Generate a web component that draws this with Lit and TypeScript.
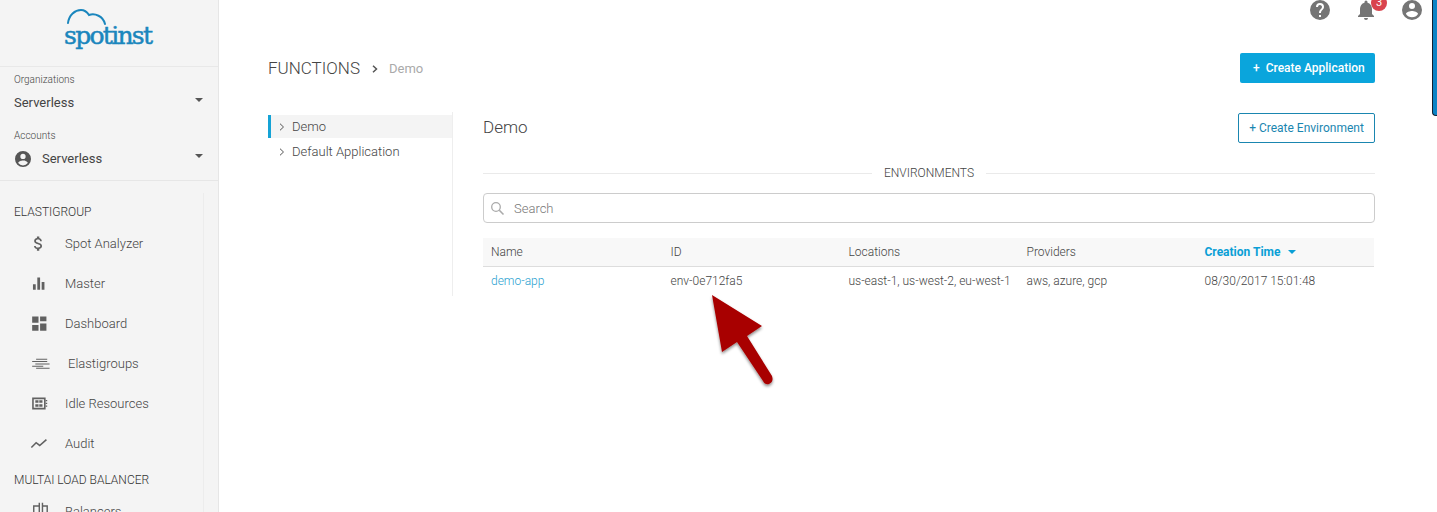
import { LitElement, html, css, svg } from "lit";
import { customElement } from "lit/decorators.js";

const navIcons: Record<string, unknown> = {
  dollar: svg`<path fill="#616161" d="M11.8 10.9c-2.27-.59-3-1.2-3-2.15 0-1.09 1.01-1.85 2.7-1.85 1.78 0 2.44.85 2.5 2.1h2.21c-.07-1.72-1.12-3.3-3.21-3.81V3h-3v2.16c-1.94.42-3.5 1.68-3.5 3.61 0 2.31 1.91 3.46 4.7 4.13 2.5.6 3 1.48 3 2.41 0 .69-.49 1.79-2.7 1.79-2.06 0-2.87-.92-2.98-2.1h-2.2c.12 2.19 1.76 3.42 3.68 3.83V21h3v-2.15c1.95-.37 3.5-1.5 3.5-3.55 0-2.84-2.43-3.81-4.7-4.4z"/>`,
  bars: svg`<path fill="#616161" d="M5 13h3.500v7H5zM10.500 4.500h3.500V20h-3.500zM16 10h3.500v10H16z"/>`,
  dash: svg`<path fill="#616161" d="M4 11h8V3H4zm0 10h8v-7H4zm10 0h8V12h-8zm0-18v6h8V3z"/>`,
  groups: svg`<path fill="none" stroke="#616161" stroke-width="1.300" d="M9 6.500h14M4 9.500h19M8 12.500h18M4 15.500h14M9 18h17"/>`,
  idle: svg`<path fill="none" stroke="#616161" stroke-width="2" d="M5 5.500h15v13H5z"/><path fill="#616161" d="M8 8h4v3H8zM13 8h4v3h-4zM8 13h4v3H8zM13 13h4v3h-4zM21 7.500h2V9h-2zM21 11h2v1.500h-2zM21 14.500h2V16h-2z"/>`,
  audit: svg`<path fill="none" stroke="#616161" stroke-width="2" d="M3 17l6-6 4.500 3.500L22 7"/>`,
  bal: svg`<path fill="none" stroke="#616161" stroke-width="1.800" d="M6 24V5h7M13 24V1M17 24V1M17 5h6v19"/>`,
};

@customElement("app-root")
export class AppRoot extends LitElement {
  static styles = css`
    :host { display: block; width: 1437px; height: 512px; overflow: hidden; position: relative;
      font-family: Roboto, "Liberation Sans", sans-serif; font-weight: 300; color: #555; background: #fff; }
    * { box-sizing: border-box; }
    .page { display: flex; height: 512px; }
    .side { width: 219px; flex: none; height: 512px; background: #f4f4f4; border-right: 1px solid #e6e6e6; overflow: hidden; }
    .logo { height: 67px; border-bottom: 1px solid #e8e8e8; position: relative; }
    .logo svg { position: absolute; left: 60px; top: 4px; }
    .logotext { position: absolute; left: 64px; top: 21px; font: 400 25px/30px "DejaVu Serif", serif; color: #1a86bd; letter-spacing: -1.700px; -webkit-text-stroke: .5px #1a86bd; }
    .pick { height: 114px; border-bottom: 1px solid #e6e6e6; padding: 0 14px; }
    .lab { font-size: 10px; line-height: 12px; color: #444; }
    .val { display: flex; align-items: center; font-size: 13px; line-height: 16px; font-weight: 400; color: #444; margin-top: 9px; height: 16px; }
    .pick .lab:first-child { padding-top: 7px; height: 19px; }
    .lab.two { margin-top: 19px; }
    .val svg { margin: 0 11px 0 1px; }
    .caret { margin-left: auto; margin-right: 1px; margin-top: -6px; width: 0; height: 0; border: 4.500px solid transparent; border-top-color: #555; border-bottom: 0; }
    .nav { width: 204px; height: 331px; border-right: 1px solid #ececec; margin-top: 12px; padding-left: 14px; }
    .sec { font-size: 12px; line-height: 14px; color: #333; padding: 12px 0 4px; }
    .sec.second { padding: 10px 0 4px; }
    .item { display: flex; align-items: center; height: 40px; font-size: 13px; color: #444; }
    .ico { width: 51px; display: flex; padding-left: 15px; flex: none; }
    .ico svg { overflow: visible; }
    .shift { margin-left: 3px; }
    .main { flex: 1; min-width: 0; position: relative; padding: 0 62px 0 49px; }
    .top { height: 53px; position: relative; }
    .ticons { position: absolute; right: -49px; top: -2px; display: flex; }
    .bell { position: relative; margin-left: 22px; }
    .badge { position: absolute; left: 17px; top: -3px; width: 16px; height: 16px; border-radius: 50%; background: #d9434e; color: #fff; font-size: 11px; line-height: 16px; text-align: center; font-weight: 400; }
    .user { margin-left: 22px; }
    .head { display: flex; align-items: center; height: 30px; }
    .crumb { font-size: 17px; color: #444; margin-top: -1px; }
    .chev { margin: 1px 11px 0 12px; }
    .crumb2 { font-size: 13px; color: #aaa; font-weight: 400; margin-top: 1px; }
    .btn { margin-left: auto; height: 30px; width: 135px; background: #0aa5dc; color: #fff; border-radius: 2px; font-size: 12px; font-weight: 500; display: flex; align-items: center; padding-left: 13px; }
    .btn .plus { margin-right: 6px; }
    .cols { display: flex; margin-top: 29px; }
    .tree { width: 185px; height: 184px; border-right: 1px solid #eee; flex: none; font-size: 13px; color: #444; padding-top: 3px; }
    .node { height: 23px; margin-bottom: 2px; display: flex; align-items: center; padding-left: 8px; border-left: 3px solid transparent; }
    .node.on { background: #f4f4f4; border-left-color: #15a3d6; }
    .node svg { margin-right: 7px; }
    .right { flex: 1; min-width: 0; padding: 1px 0 0 30px; }
    .rhead { display: flex; align-items: center; justify-content: space-between; height: 30px; }
    .rtitle { font-size: 17px; color: #444; margin-bottom: 2px; }
    .btn2 { width: 137px; height: 30px; border: 1px solid #1a86b0; border-radius: 2px; color: #1a86b0; font-size: 12px; font-weight: 400; display: flex; align-items: center; justify-content: center; }
    .divider { display: flex; align-items: center; gap: 12px; margin-top: 23px; height: 14px; font-size: 12px; color: #444; }
    .divider i { flex: 1; height: 1px; background: #eaeaea; }
    .search { display: flex; align-items: center; height: 30px; border: 1px solid #ccc; border-radius: 4px; margin-top: 13px; padding-left: 6px; font-size: 13px; color: #777; }
    .search svg { margin-right: 9px; }
    .thead, .trow { display: grid; grid-template-columns: 179.500px 178px 178px 178px 1fr; align-items: center; padding-left: 8px; font-size: 12px; color: #444; }
    .thead { margin-top: 15px; height: 29px; background: #f8f8f8; border-bottom: 1px solid #ddd; margin-right: 1px; }
    .trow { height: 27px; }
    .sorted { color: #0a9fd6; font-weight: 700; display: flex; align-items: center; }
    .sorted::after { content: ""; margin-left: 8px; border: 4px solid transparent; border-top-color: #0a9fd6; border-bottom: 0; }
    .link { color: #2a9fd0; }
    .rail { position: absolute; right: 0; top: -10px; width: 5px; height: 126px; background: #0b84c6; border: 1px solid #123; border-right: 0; border-radius: 4px 0 0 4px; }
    .arrow { position: absolute; left: 708px; top: 292px; }
  `;

  private item(icon: string, label: string, shift = false) {
    return html`<div class="item">
      <span class="ico"><svg width="19" height="19" viewBox="0 0 24 24">${navIcons[icon]}</svg></span>
      <span class=${shift ? "shift" : ""}>${label}</span>
    </div>`;
  }

  private chev() {
    return html`<svg width="6" height="8" viewBox="0 0 6 8"><path d="M1 .7 4.500 4 1 7.300" fill="none" stroke="#555" stroke-width="1"/></svg>`;
  }

  render() {
    return html`<div class="page">
      <aside class="side">
        <div class="logo">
          <svg width="50" height="24" viewBox="60 4 50 24"><path fill="none" stroke="#1a86bd" stroke-width="2" stroke-linecap="round" d="M68 23C69 15 75 10 81 10 85 10 87 12 89 15 95 13 103 16 105 24"/></svg>
          <div class="logotext">spotinst</div>
        </div>
        <div class="pick">
          <div class="lab">Organizations</div>
          <div class="val">Serverless<span class="caret"></span></div>
          <div class="lab two">Accounts</div>
          <div class="val">
            <svg width="16" height="16" viewBox="2 2 20 20"><path fill="#555" d="M12 2a10 10 0 1 0 0 20 10 10 0 0 0 0-20zm0 3.500a3.300 3.300 0 1 1 0 6.600 3.300 3.300 0 0 1 0-6.600zM12 20a7.500 7.500 0 0 1-6-3.100c.1-2 4-3.100 6-3.100s5.900 1.100 6 3.100A7.500 7.500 0 0 1 12 20z"/></svg>
            Serverless<span class="caret"></span>
          </div>
        </div>
        <div class="nav">
          <div class="sec">ELASTIGROUP</div>
          ${this.item("dollar", "Spot Analyzer")}
          ${this.item("bars", "Master")}
          ${this.item("dash", "Dashboard")}
          ${this.item("groups", "Elastigroups", true)}
          ${this.item("idle", "Idle Resources")}
          ${this.item("audit", "Audit")}
          <div class="sec second">MULTAI LOAD BALANCER</div>
          ${this.item("bal", "Balancers")}
        </div>
      </aside>
      <main class="main">
        <div class="top">
          <div class="ticons">
            <svg width="24" height="24" viewBox="0 0 24 24"><path fill="#757575" d="M12 2a10 10 0 1 0 0 20 10 10 0 0 0 0-20zm1 17h-2v-2h2zm2.070-7.750-.9.920C13.450 12.900 13 13.500 13 15h-2v-.5c0-1.100.45-2.100 1.170-2.830l1.240-1.260A2 2 0 1 0 10 9H8a4 4 0 0 1 8 0c0 .88-.36 1.680-.93 2.250z"/></svg>
            <span class="bell">
              <svg width="24" height="24" viewBox="0 0 24 24"><path fill="#757575" d="M12 22a2 2 0 0 0 2-2h-4a2 2 0 0 0 2 2zm6-6v-5c0-3.070-1.640-5.640-4.500-6.320V4a1.500 1.500 0 0 0-3 0v.68C7.630 5.360 6 7.920 6 11v5l-2 2v1h16v-1z"/></svg>
              <span class="badge">3</span>
            </span>
            <svg class="user" width="24" height="24" viewBox="0 0 24 24"><path fill="#757575" d="M12 2a10 10 0 1 0 0 20 10 10 0 0 0 0-20zm0 3a3 3 0 1 1 0 6 3 3 0 0 1 0-6zm0 14.200a7.200 7.200 0 0 1-6-3.220c.03-1.990 4-3.080 6-3.080s5.970 1.090 6 3.080a7.200 7.200 0 0 1-6 3.220z"/></svg>
          </div>
        </div>
        <div class="head">
          <span class="crumb">FUNCTIONS</span>
          <svg class="chev" width="6" height="8" viewBox="0 0 6 8"><path d="M1 .7 4.500 4 1 7.300" fill="none" stroke="#555" stroke-width="1.500"/></svg>
          <span class="crumb2">Demo</span>
          <div class="btn"><span class="plus">+</span>Create Application</div>
        </div>
        <div class="cols">
          <div class="tree">
            <div class="node on">${this.chev()}Demo</div>
            <div class="node">${this.chev()}Default Application</div>
          </div>
          <div class="right">
            <div class="rhead"><span class="rtitle">Demo</span><div class="btn2">+ Create Environment</div></div>
            <div class="divider"><i></i>ENVIRONMENTS<i></i></div>
            <div class="search">
              <svg width="15" height="15" viewBox="0 0 15 15"><circle cx="6" cy="6" r="4.300" fill="none" stroke="#aaa" stroke-width="1.300"/><path d="M9.300 9.300 13.500 13.500" stroke="#aaa" stroke-width="1.600"/></svg>
              Search
            </div>
            <div class="thead"><span>Name</span><span>ID</span><span>Locations</span><span>Providers</span><span class="sorted">Creation Time</span></div>
            <div class="trow"><span class="link">demo-app</span><span>env-0e712fa5</span><span>us-east-1, us-west-2, eu-west-1</span><span>aws, azure, gcp</span><span>08/30/2017 15:01:48</span></div>
          </div>
        </div>
      </main>
    </div>
    <div class="rail"></div>
    <svg class="arrow" width="76" height="104" viewBox="0 0 76 104">
      <defs><filter id="s" x="-20%" y="-20%" width="150%" height="150%"><feDropShadow dx="0" dy="2" stdDeviation="1.500" flood-color="#000" flood-opacity=".45"/></filter></defs>
      <path filter="url(#s)" fill="#a80000" d="M4 3 54 34 39 44 64 84Q66 90 61 92 57 93 55 89L29 50 14 60Z"/>
    </svg>`;
  }
}
